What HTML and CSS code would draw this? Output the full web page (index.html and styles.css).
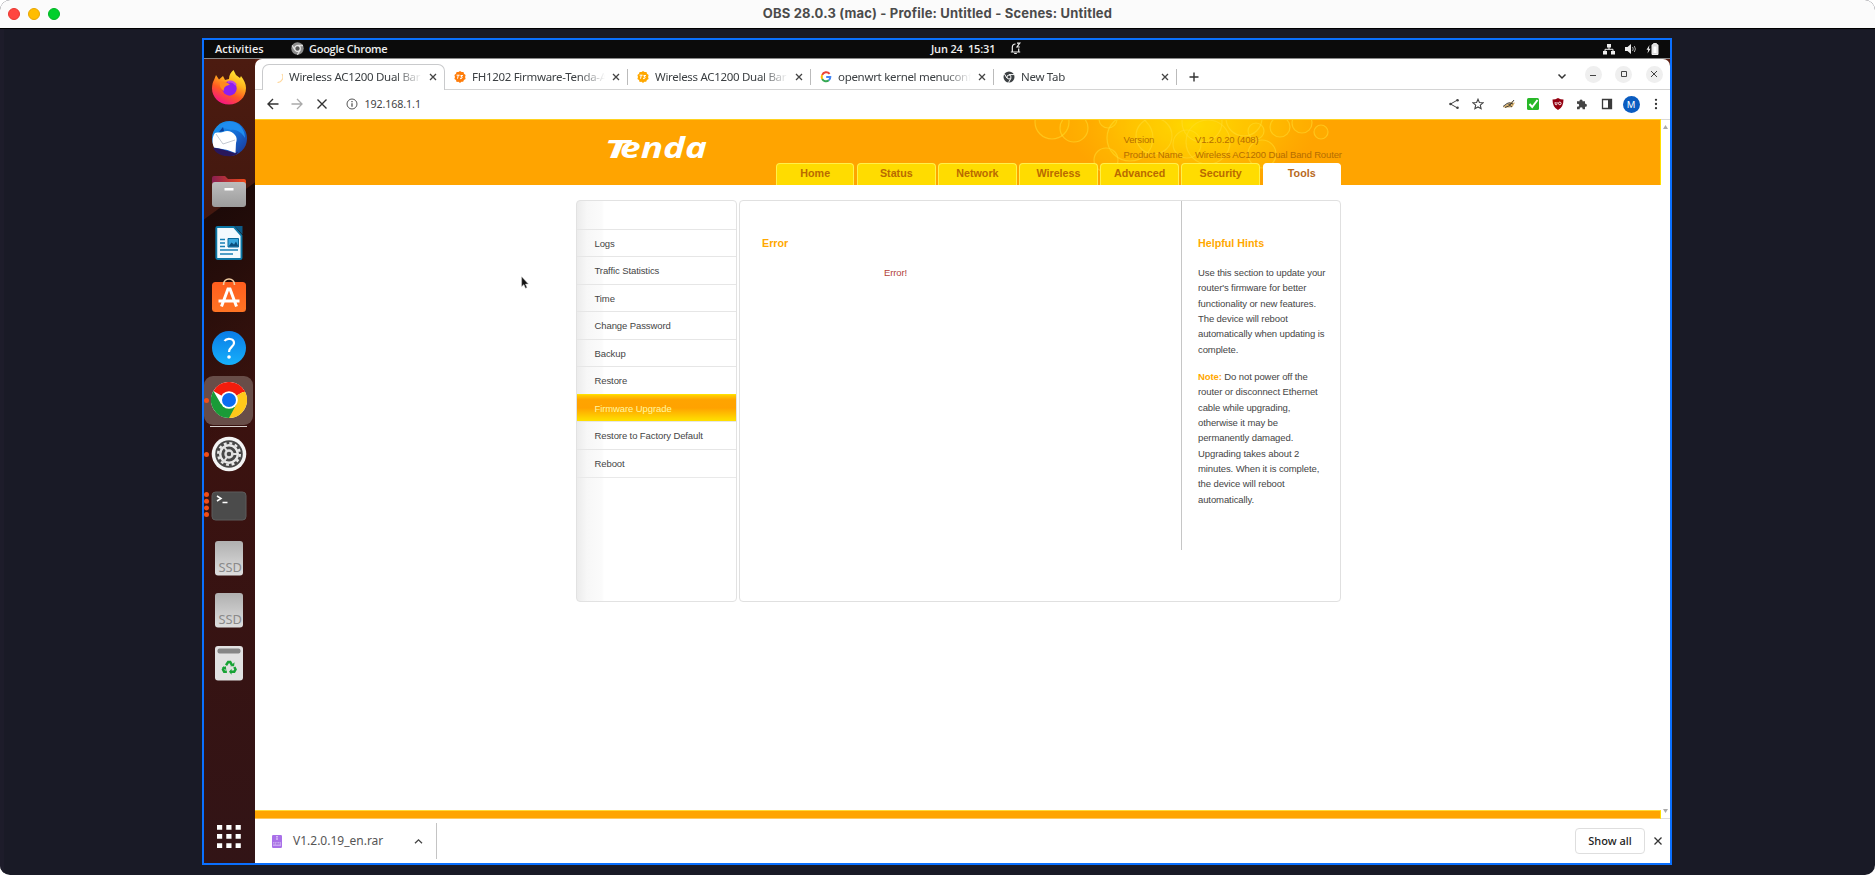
FILE: index.html
```html
<!DOCTYPE html>
<html lang="en">
<head>
<meta charset="utf-8">
<title>OBS 28.0.3 (mac) - Profile: Untitled - Scenes: Untitled</title>
<link rel="stylesheet" href="styles.css">
</head>
<body>
<svg class="defs" width="0" height="0">
  <defs>
    <linearGradient id="ff" x1=".8" y1="0" x2=".3" y2="1"><stop offset="0" stop-color="#fff33a"/><stop offset=".35" stop-color="#ffb41e"/><stop offset=".65" stop-color="#ff5a22"/><stop offset="1" stop-color="#f5108a"/></linearGradient>
    <linearGradient id="tb" x1="0" y1="0" x2="1" y2="1"><stop offset="0" stop-color="#1aa0f5"/><stop offset=".55" stop-color="#1468d2"/><stop offset="1" stop-color="#1c2f8c"/></linearGradient>
    <linearGradient id="fold" x1="0" x2="1"><stop offset="0" stop-color="#8a1f50"/><stop offset="1" stop-color="#f04a18"/></linearGradient>
    <linearGradient id="grey" x1="0" y1="0" x2="0" y2="1"><stop offset="0" stop-color="#bdbdbd"/><stop offset="1" stop-color="#9c9c9c"/></linearGradient>
    <linearGradient id="ssd" x1="0" y1="0" x2="0" y2="1"><stop offset="0" stop-color="#b0b0b0"/><stop offset="1" stop-color="#dedede"/></linearGradient>
    <linearGradient id="bag" x1="0" y1="0" x2="0" y2="1"><stop offset="0" stop-color="#ff5e1e"/><stop offset="1" stop-color="#ff7424"/></linearGradient>
    <linearGradient id="help" x1="0" y1="0" x2="0" y2="1"><stop offset="0" stop-color="#0a7ce6"/><stop offset="1" stop-color="#16b0fb"/></linearGradient>
    <radialGradient id="glow"><stop offset="0" stop-color="#ffdc00" stop-opacity=".95"/><stop offset=".5" stop-color="#ffd000" stop-opacity=".6"/><stop offset="1" stop-color="#ffc000" stop-opacity="0"/></radialGradient>
    <symbol id="x" viewBox="0 0 10 10"><path d="M2 2l6 6M8 2l-6 6" stroke="currentColor" stroke-width="1.3" fill="none"/></symbol>
    <symbol id="tenda" viewBox="0 0 12 12"><path d="M6 0l1.6 1 1.9-.1.5 1.8L11.6 4l-.5 2 .5 2-1.7 1-.7 1.8-1.8-.1L6 12l-1.500-1.200-1.900.1L2 9 .4 8l.6-2L.4 4 2 2.800l.6-1.900 1.900.1z" fill="currentColor"/><path d="M2.600 4.200h3M4.300 4.200l-.8 3.500M6.500 4.500h2.300l-2 1.400c2.400.1 1.600 2-.8 1.700" stroke="#fff" stroke-width="1" fill="none"/></symbol>
  </defs>
</svg>
<div class="obs">
  <header class="titlebar">
    <div class="lights"><i class="red"></i><i class="yellow"></i><i class="green"></i></div>
    <div class="title">OBS 28.0.3 (mac) - Profile: Untitled - Scenes: Untitled</div>
  </header>
  <main class="stage">
    <div class="capture">
      <div class="topbar">
        <span class="act">Activities</span>
        <svg class="app-ico" width="13" height="13" viewBox="0 0 13 13"><circle cx="6.500" cy="6.500" r="6.200" fill="#8d8d8d"/><path d="M6.500 3.500h5.500M3.900 8L1.200 3.400M9.100 8l-2.700 4.700" stroke="#ddd" stroke-width="1.300"/><circle cx="6.500" cy="6.500" r="2.800" fill="#555" stroke="#eee" stroke-width="1.200"/></svg>
        <span class="app">Google Chrome</span>
        <span class="clock">Jun 24&nbsp; 15:31</span>
        <svg class="bell" width="11" height="13" viewBox="0 0 11 13"><path d="M.8 10h9.400M2.300 10V5.500C2.300 3.300 3.500 2 5.500 2M8.700 6.500V10M4.200 11.500h2.600M7 1.200h2.800L7 5h2.800" stroke="#eee" stroke-width="1.200" fill="none"/></svg>
        <div class="tray">
          <svg width="12" height="12" viewBox="0 0 12 12"><path d="M4 1h4v3.500H4zM0 8h4v3.500H0zM8 8h4v3.500H8z" fill="#eee"/><path d="M6 4v2.300M2 8V6.300h8V8" stroke="#eee" fill="none"/></svg>
          <svg width="13" height="12" viewBox="0 0 13 12"><path d="M1 4h2.500L7 1v10L3.500 8H1z" fill="#eee"/><path d="M8.500 4q1.500 2 0 4M10.300 3q2.200 3 0 6" stroke="#aaa" fill="none"/></svg>
          <svg width="13" height="12" viewBox="0 0 13 12"><path d="M3.500 2L.5 6.800h1.700L1.500 10.500 4.500 5.700H2.800z" fill="#eee"/><path d="M6 1.800h1.500V.6h3v1.200H12v9.700H6z" fill="#ddd" stroke="#eee"/><path d="M7.500 3.500h3v6.500h-3z" fill="#fff"/></svg>
        </div>
      </div>
      <div class="desktop">
        <nav class="dock">
          <div class="item"><svg viewBox="0 0 36 36"><path d="M18 35.500C8 35.500 1 28 1 19.500c0-4 1-7 2-8.500l2-5 3 4.500L12 7l2 4 4-1C18 6 20 3 22.500 1L25 6l4 3 1-2c3 4 5 8 5 12 0 9.500-7.500 16.500-17 16.500z" fill="url(#ff)"/><circle cx="18.500" cy="19.500" r="7.200" fill="#8c1ff0"/><path d="M9 13c4-1 8 0 10 3-3 0-7 2-6 6-3-2-5-5-4-9z" fill="#ff8a1c"/><path d="M17 13c3-1 6 0 8 3" stroke="#c14ae0" stroke-width="2" fill="none"/></svg></div>
          <div class="item"><svg viewBox="0 0 36 36"><circle cx="18.500" cy="17.500" r="17.500" fill="url(#tb)"/><path d="M9 6C13 1 20-1 27 3c4 3 7 8 7 14-3-5-8-9-14-8z" fill="#1f8df0"/><path d="M4 12c3-1 5 0 8-1 4-2 9-1 12 3 2 2 2 5 1 8l-.5 10-8-3L3 26.500C1 22 1 16 4 12z" fill="#fff"/><path d="M5 13l7 10 12-4" stroke="#c3c9d2" fill="none"/><path d="M2 27c5 0 13 2 22 5.500l3-2c-1 3-3 4-6 4.500C12 36 5 33 2 27z" fill="#28175c"/><path d="M8 11l4-5 1 4z" fill="#0b3d9a"/></svg></div>
          <div class="item"><svg viewBox="0 0 36 36"><path d="M1 15V5q0-2 2-2h11l3 3h16q2 0 2 2v7z" fill="url(#fold)"/><rect x="1" y="9" width="34" height="25" rx="3" fill="url(#grey)"/><rect x="13.500" y="15" width="9" height="2.500" fill="#fff"/></svg></div>
          <div class="item"><svg viewBox="0 0 36 36"><path d="M6.500 2H23l7.500 8.500V33q0 1-1.200 1H6.500q-1.200 0-1.200-1.200V3q0-1 1.200-1z" fill="#f2fafe" stroke="#0b76a5" stroke-width="1.900"/><path d="M23.500 1H31.500v8.500z" fill="#0d5a86"/><path d="M9 14.500h5M9 18h5M9 21.500h5M9 25h18M9 29h13" stroke="#1780b5" stroke-width="1.500"/><path d="M17 13.500h10.500v8.500H17z" fill="#3ba8dd" stroke="#0b6a9a"/><path d="M17.500 21.500l3-4 2.500 2 2-3 2.500 5z" fill="#0c4f7c"/></svg></div>
          <div class="item"><svg viewBox="0 0 36 36"><rect x="1" y="5" width="34" height="30" rx="3.500" fill="url(#bag)"/><path d="M12.500 8C12 0 24 0 23.500 8" stroke="#f3cfa4" stroke-width="1.600" fill="none"/><path d="M10.500 29.500L17 12h2l6.500 17.500M7.500 24h21" stroke="#fff" stroke-width="3" fill="none"/></svg></div>
          <div class="item"><svg viewBox="0 0 36 36"><circle cx="18" cy="18" r="17" fill="url(#help)"/><path d="M13.500 11c2-3 9.500-3 9.500 2 0 4-5 4-5 9" stroke="#fff" stroke-width="2.200" fill="none"/><circle cx="18" cy="27" r="1.800" fill="#fff"/></svg></div>
          <div class="item on d1"><svg viewBox="0 0 36 36"><circle cx="18" cy="18" r="18" fill="#fff"/><path d="M18 18L2.400 9A18 18 0 0 1 33.600 9z" fill="#f21c0d"/><path d="M18 18L33.600 9A18 18 0 0 1 18 36l-1-9z" fill="#ffc81a"/><path d="M18 18L10 22 2.400 9A18 18 0 0 0 18 36l7-13z" fill="#1a9b37"/><path d="M18 9h15.600" stroke="#f21c0d" stroke-width="2"/><circle cx="18" cy="18" r="8.800" fill="#fff"/><circle cx="18" cy="18" r="7" fill="#0b6cf2"/></svg></div>
          <hr>
          <div class="item d1"><svg viewBox="0 0 36 36"><circle cx="18" cy="18" r="17.300" fill="#f4f4f4"/><circle cx="18" cy="18" r="13.800" fill="#484848"/><circle cx="18" cy="18" r="10.800" fill="none" stroke="#e8e8e8" stroke-width="2.400" stroke-dasharray="2.900 2.755"/><circle cx="18" cy="18" r="8.800" fill="none" stroke="#e8e8e8" stroke-width="2.400"/><circle cx="18" cy="18" r="3.500" fill="none" stroke="#e0e0e0" stroke-width="2.400"/><path d="M20 18h6M16.500 16l-3.500-5.500M16.500 20l-3.500 5.500" stroke="#e0e0e0" stroke-width="2"/></svg></div>
          <div class="item d4"><svg viewBox="0 0 36 36"><rect x="1" y="4" width="34" height="28" rx="3.500" fill="#4b4b4b" stroke="#5c5c5c"/><path d="M6 8l4 2.500L6 13M11.500 14.500h5" stroke="#fff" stroke-width="1.500" fill="none"/></svg></div>
          <div class="item"><svg viewBox="0 0 36 36"><rect x="4" y="1" width="28" height="34.500" rx="3" fill="url(#ssd)"/><text x="7.500" y="31.500" textLength="23.500" lengthAdjust="spacingAndGlyphs" class="ssd">SSD</text></svg></div>
          <div class="item"><svg viewBox="0 0 36 36"><rect x="4" y="1" width="28" height="34.500" rx="3" fill="url(#ssd)"/><text x="7.500" y="31.500" textLength="23.500" lengthAdjust="spacingAndGlyphs" class="ssd">SSD</text></svg></div>
          <div class="item"><svg viewBox="0 0 36 36"><rect x="4" y="1" width="28" height="34.500" rx="3" fill="#e2e2e2"/><rect x="6.500" y="3.500" width="23" height="5" rx="2" fill="#868686"/><g transform="translate(2.700 3.700) scale(.85)"><g fill="none" stroke="#18a335" stroke-width="2.900"><path d="M14.500 19.500l2.500-3.800h2.500l2 3.500M24.300 21.500l1.400 3-1.500 2.500h-4M15.500 27h-3.200l-1.400-2.600 1.700-3"/></g><path d="M19.500 20.500h4.500l.5-4.500zM21 23.500L18 27l3 3.500zM9.500 22.500l4.800-2 .5 4.500z" fill="#18a335"/></g></svg></div>
          <svg class="grid" width="25" height="25" viewBox="0 0 25 25" fill="#fff"><path d="M0 1h5.200v4.800H0zM9.300 1h5.200v4.800H9.300zM18.600 1h5.200v4.800h-5.200zM0 10h5.200v4.800H0zM9.300 10h5.200v4.800H9.300zM18.600 10h5.200v4.800h-5.200zM0 19.200h5.200V24H0zM9.300 19.200h5.200V24H9.300zM18.600 19.200h5.200V24h-5.200z"/></svg>
        </nav>
        <section class="chrome">
          <div class="tabs">
            <div class="tab active"><svg class="fav" viewBox="0 0 12 12"><path d="M6.500 11.500A5.500 5.500 0 0 0 11 3" stroke="#ffd9a0" stroke-width="1.200" fill="none"/></svg><span>Wireless AC1200 Dual Bar</span><svg class="cl"><use href="#x"/></svg></div>
            <div class="tab"><svg class="fav or"><use href="#tenda"/></svg><span>FH1202 Firmware-Tenda-A</span><svg class="cl"><use href="#x"/></svg></div>
            <div class="tab"><svg class="fav am"><use href="#tenda"/></svg><span>Wireless AC1200 Dual Bar</span><svg class="cl"><use href="#x"/></svg></div>
            <div class="tab"><svg class="fav" viewBox="0 0 12 12" fill="none" stroke-width="2"><path d="M9.600 2.900A4.300 4.300 0 0 0 2.200 4" stroke="#ea4335"/><path d="M2.200 4a4.300 4.300 0 0 0 0 4" stroke="#fbbc05"/><path d="M2.200 8a4.300 4.300 0 0 0 6.600 1.300" stroke="#34a853"/><path d="M8.800 9.300Q10.300 8 10.300 6H6.200" stroke="#4285f4"/></svg><span>openwrt kernel menuconf</span><svg class="cl"><use href="#x"/></svg></div>
            <div class="tab"><svg class="fav" viewBox="0 0 12 12"><circle cx="6" cy="6" r="5.500" fill="#3c4043"/><path d="M6 3.600h5.200M4 7.200L1.400 2.900M8 7.200l-2.500 4.300" stroke="#fff" stroke-width="1"/><circle cx="6" cy="6" r="2" fill="#3c4043" stroke="#fff" stroke-width="1"/></svg><span>New Tab</span><svg class="cl"><use href="#x"/></svg></div>
            <svg class="plus" viewBox="0 0 10 10"><path d="M5 .5v9M.5 5h9" stroke="#333" stroke-width="1.400"/></svg>
            <div class="wins">
              <svg class="chev" viewBox="0 0 10 10"><path d="M1.500 3.500L5 7l3.500-3.500" fill="none" stroke="#333" stroke-width="1.500"/></svg>
              <i><svg viewBox="0 0 10 10"><path d="M2 6.500h6" stroke="#444"/></svg></i>
              <i><svg viewBox="0 0 10 10"><path d="M2.500 2.500h5v5h-5z" fill="none" stroke="#444"/></svg></i>
              <i><svg viewBox="0 0 10 10"><path d="M2 2l6 6M8 2l-6 6" stroke="#444"/></svg></i>
            </div>
          </div>
          <div class="toolbar">
            <svg class="b" viewBox="0 0 12 12"><path d="M11.500 6H1.200M6 1L1 6l5 5" stroke="#333" stroke-width="1.400" fill="none"/></svg>
            <svg class="b" viewBox="0 0 12 12"><path d="M.5 6h10.300M6 1l5 5-5 5" stroke="#aaa" stroke-width="1.300" fill="none"/></svg>
            <svg class="b" viewBox="0 0 12 12"><path d="M1.500 1.500l9 9M10.500 1.500l-9 9" stroke="#333" stroke-width="1.400"/></svg>
            <svg class="info" viewBox="0 0 12 12"><circle cx="6" cy="6" r="5" fill="none" stroke="#555"/><path d="M6 5.300v3.400M6 3v1.300" stroke="#555" stroke-width="1.300"/></svg>
            <span class="url">192.168.1.1</span>
            <div class="ext">
              <svg viewBox="0 0 12 12"><path d="M9.500 2L2.500 6l7 4" stroke="#444" fill="none"/><circle cx="9.500" cy="2.200" r="1.300" fill="#444"/><circle cx="2.500" cy="6" r="1.300" fill="#444"/><circle cx="9.500" cy="9.800" r="1.300" fill="#444"/></svg>
              <svg viewBox="0 0 12 12"><path d="M6 1.200l1.400 3.300 3.600.3L8.300 7.200l.8 3.500L6 8.900l-3.100 1.800.8-3.500L1 4.800l3.600-.3z" fill="none" stroke="#444" stroke-width="1.100"/></svg>
              <svg class="gap" viewBox="0 0 12 12"><path d="M0 9l4-3 7-3.500L9 5l3-.5L9.500 9l-3 .5L1 9.500z" fill="#d9b26e"/><path d="M0 8.500l4-3M4 5l3 2 4-5M5.500 4.500L10 6M2 9.500l5-2 2 1.500" stroke="#333" stroke-width=".9" fill="none"/></svg>
              <svg viewBox="0 0 12 12"><rect width="12" height="12" rx="1.500" fill="#28b828"/><path d="M2.500 6l2.700 3L10.500 2" stroke="#fff" stroke-width="2" fill="none"/></svg>
              <svg viewBox="0 0 12 12"><path d="M6 0q2.500 1.500 5.500 1.500 0 8-5.500 10.500Q.5 9.500.5 1.500 3.500 1.500 6 0z" fill="#940010"/><path d="M3.200 4v1.800q0 1 .9 1t.9-1V4M6.500 5.400a1.300 1.300 0 1 0 2.600 0 1.300 1.300 0 1 0-2.600 0" fill="none" stroke="#fff" stroke-width=".9"/></svg>
              <svg viewBox="0 0 12 12"><path d="M1 3.300h2.600a1.500 1.500 0 1 1 2.900 0H9v2.500a1.500 1.500 0 1 1 0 2.900v2.500H6.600a1.500 1.500 0 1 0-2.900 0H1V8.600a1.500 1.500 0 1 0 0-2.700z" fill="#444"/></svg>
              <svg viewBox="0 0 12 12"><path d="M1.500 1.500h9v9h-9z" fill="none" stroke="#3a3a3a" stroke-width="1.300"/><path d="M7 1.500h3.500v9H7z" fill="#3a3a3a"/></svg>
              <b class="me">M</b>
              <svg viewBox="0 0 12 12" fill="#333"><circle cx="6" cy="1.800" r="1.150"/><circle cx="6" cy="6" r="1.150"/><circle cx="6" cy="10.200" r="1.150"/></svg>
            </div>
          </div>
          <div class="view">
            <div class="page">
              <div class="head">
                <svg class="bubbles" width="330" height="65" viewBox="0 0 330 65" fill="#ffe000" fill-opacity=".13" stroke="#ffdc30" stroke-opacity=".55" stroke-width="1.200">
                  <ellipse cx="170" cy="5" rx="125" ry="66" fill="url(#glow)" fill-opacity="1" stroke="none"/>
                  <circle cx="30" cy="2" r="17"/><circle cx="52" cy="8" r="14"/><circle cx="86" cy="-1" r="9"/><circle cx="108" cy="18" r="23"/><circle cx="132" cy="16" r="18"/><circle cx="84" cy="40" r="12"/><circle cx="165" cy="24" r="14"/><circle cx="186" cy="22" r="22"/><circle cx="180" cy="2" r="20"/><circle cx="234" cy="11" r="8"/><circle cx="240" cy="34" r="14"/><circle cx="258" cy="7" r="10"/><circle cx="280" cy="3" r="10"/><circle cx="299" cy="12" r="7"/><circle cx="222" cy="-2" r="18"/>
                </svg>
                <div class="head-in">
                  <svg class="logo" width="104" height="30" viewBox="0 0 104 30"><g class="brand"><text x="-3" y="25" font-size="24.500" textLength="25" lengthAdjust="spacingAndGlyphs">T</text><text x="13" y="25" font-size="29" textLength="87" lengthAdjust="spacingAndGlyphs">enda</text></g></svg>
                  <div class="head-r">
                    <dl><dt>Version</dt><dd>V1.2.0.20 (408)</dd><dt>Product Name</dt><dd>Wireless AC1200 Dual Band Router</dd></dl>
                    <div class="menu"><a>Home</a><a>Status</a><a>Network</a><a>Wireless</a><a>Advanced</a><a>Security</a><a class="cur">Tools</a></div>
                  </div>
                </div>
              </div>
              <div class="body">
                <ul class="side"><li>Logs</li><li>Traffic Statistics</li><li>Time</li><li>Change Password</li><li>Backup</li><li>Restore</li><li class="sel">Firmware Upgrade</li><li>Restore to Factory Default</li><li>Reboot</li></ul>
                <div class="panel">
                  <div class="msg"><h2>Error</h2><p>Error!</p></div>
                  <div class="hints"><h2>Helpful Hints</h2>
                    <p>Use this section to update your<br>router's firmware for better<br>functionality or new features.<br>The device will reboot<br>automatically when updating is<br>complete.</p>
                    <p><b>Note:</b> Do not power off the<br>router or disconnect Ethernet<br>cable while upgrading,<br>otherwise it may be<br>permanently damaged.<br>Upgrading takes about 2<br>minutes. When it is complete,<br>the device will reboot<br>automatically.</p>
                  </div>
                </div>
              </div>
              <div class="foot"></div>
            </div>
            <div class="scroll"><svg width="5" height="4" viewBox="0 0 5 4"><path d="M0 4l2.500-4L5 4z" fill="#aaa"/></svg><svg width="5" height="4" viewBox="0 0 5 4"><path d="M0 0l2.500 4L5 0z" fill="#aaa"/></svg></div>
          </div>
          <div class="shelf">
            <div class="dl"><svg width="10" height="13" viewBox="0 0 10 13"><rect width="10" height="13" rx="1.200" fill="#a970e8"/><path d="M5 1v4" stroke="#f0e2ff" stroke-width="1.300" stroke-dasharray="1.500 .8"/><path d="M1 7h8v4H1z" fill="#c9a5f2"/><path d="M2 9.800V8h1.200M4.300 9.800V8h1.500v1.800M7 9.800V8h1.200" stroke="#9a66d8" stroke-width=".7" fill="none"/></svg><span>V1.2.0.19_en.rar</span><svg class="up" width="9" height="9" viewBox="0 0 9 9"><path d="M1 6.300l3.500-3.500L8 6.300" stroke="#444" stroke-width="1.300" fill="none"/></svg></div>
            <button class="all">Show all</button>
            <svg class="shx" viewBox="0 0 10 10"><path d="M1.500 1.500l7 7M8.500 1.500l-7 7" stroke="#333" stroke-width="1.300"/></svg>
          </div>
        </section>
      </div>
      <svg class="cursor" width="8" height="13" viewBox="0 0 8 13"><path d="M.7.8v9.700l2.200-2 1.600 3.700 1.500-.6L4.400 8h2.900z" fill="#111" stroke="#bbb" stroke-width=".5"/></svg>
    </div>
  </main>
</div>
</body>
</html>
```
FILE: styles.css
```css
* { box-sizing: border-box; }
body { margin: 0; width: 1875px; height: 875px; overflow: hidden; background: #fff; font-family: "Liberation Sans", Arial, sans-serif; }
svg { display: block; flex: none; }
.defs { position: absolute; }
.obs { height: 875px; border-radius: 10px; overflow: hidden; background: #191a26; display: flex; flex-direction: column; }
.titlebar { height: 29px; background: #fbfbfb; border-bottom: 1px solid #000; display: grid; grid-template-columns: 200px 1fr 200px; align-items: center; }
.lights { display: flex; gap: 8px; padding-left: 8px; }
.lights i { width: 12px; height: 12px; border-radius: 50%; }
.red { background: #ff4640; border: 1px solid #e83730; }
.yellow { background: #ffbd00; border: 1px solid #e8a600; }
.green { background: #00cf2c; border: 1px solid #00b524; }
.title { text-align: center; font: 700 13px/26px Inter, sans-serif; color: #4b4b4b; letter-spacing: .18px; white-space: nowrap; padding-bottom: 2px; }
.stage { flex: 1; padding: 9px 0 0 198px; border-left: 4px solid #1d1c2a; }
.capture { width: 1470px; height: 827px; border: 2px solid #0a70ff; display: flex; flex-direction: column; position: relative; background: #fff; }
.topbar { height: 19px; background: #0b0b0b; border-bottom: 1px solid #8a8a8a; color: #eee; display: flex; align-items: center; padding: 0 11px 1px; font: 600 11px/17px "Open Sans", sans-serif; white-space: nowrap; }
.act { width: 76px; letter-spacing: .05px; }
.app-ico { margin-right: 5px; }
.app { width: 622px; letter-spacing: -.28px; }
.clock { width: 79px; letter-spacing: -.18px; }
.tray { margin-left: auto; display: flex; gap: 9px; }
.desktop { flex: 1; display: flex; min-height: 0; background: #5b2014; }
.dock { width: 51px; background: linear-gradient(144deg, transparent 105px, #1d0a08 106px, #260d0a 160px, transparent 300px) 0 30px no-repeat, linear-gradient(#4c1b10, #43180f 20%, #3b120f 45%, #321416); display: flex; flex-direction: column; padding-top: 2px; }
.item { height: 52.100px; flex: none; padding-left: 6.500px; display: flex; align-items: center; position: relative; }
.item > svg { width: 36px; height: 36px; }
.on::before { content: ""; position: absolute; inset: 2px 2px 1px 0; border-radius: 9px; background: #684d48; }
.on > svg { position: relative; }
.d1::after, .d4::after { content: ""; position: absolute; left: 0; top: 24px; width: 5px; height: 5px; border-radius: 50%; background: #f04e1a; }
.d4::after { top: 13.500px; box-shadow: 0 6.700px #f04e1a, 0 13.400px #f04e1a, 0 20px #f04e1a; }
.dock hr { width: 37px; height: 1px; border: 0; margin: .5px 0 1px 6px; background: #d8d0ce; flex: none; }
.d4::after { top: 12px; }
.ssd { font: 12.500px "Noto Sans", sans-serif; fill: #8a8a8a; }
.grid { margin: auto 0 14px 13px; }
.chrome { flex: 1; display: flex; flex-direction: column; background: #fff; border-radius: 7px 7px 0 0; min-width: 0; }
.tabs { height: 31px; display: flex; align-items: stretch; padding-left: 7px; border-bottom: 1px solid #d4d4d4; font: 11.500px/26px "Noto Sans", sans-serif; color: #3c4043; }
.tab { width: 183px; display: flex; align-items: center; padding: 5px 0 0 9px; position: relative; }
.tab:not(.active)::after { content: ""; position: absolute; right: 0; top: 10px; height: 16px; width: 1px; background: #bbb; }
.active { border: 1px solid #c9cacc; border-bottom: 0; border-radius: 7px 7px 0 0; margin: 5px 0 -1px; padding: 0 0 2px 8px; background: #fff; }
.fav { width: 12px; height: 12px; }
.or { color: #ff7d0a; }
.am { color: #ffa800; }
.tab span { width: 133px; margin-left: 6px; overflow: hidden; white-space: nowrap; letter-spacing: -.3px; mask-image: linear-gradient(90deg, #000 80%, transparent); -webkit-mask-image: linear-gradient(90deg, #000 80%, transparent); }
.cl { width: 10px; height: 10px; margin-left: 6px; color: #444; }
.plus { width: 10px; height: 10px; margin: 13px 0 0 12px; }
.wins { margin-left: auto; display: flex; align-items: center; gap: 13.500px; padding: 0 7.500px 0 0; }
.wins i { width: 17px; height: 17px; border-radius: 50%; background: #efefef; padding: 3.500px; }
.wins i svg { width: 10px; height: 10px; }
.chev { width: 10px; height: 10px; margin: 4px 4px 0 0; }
.toolbar { height: 29px; display: flex; align-items: center; padding: 0 8.500px 1px 11.500px; }
.b { width: 12px; height: 12px; margin-right: 12.500px; }
.info { width: 12px; height: 12px; margin: 0 7px 0 5.500px; }
.url { font: 10.700px/20px "Noto Sans", sans-serif; color: #444; letter-spacing: -.1px; }
.ext { margin-left: auto; display: flex; align-items: center; gap: 12.500px; }
.ext svg { width: 12px; height: 12px; }
.ext .gap { margin-left: 6px; }
.me { width: 17px; height: 17px; margin: 0 -2.500px; border-radius: 50%; background: #0b5cc0; color: #fff; font: 9.500px/17px "Noto Sans", sans-serif; text-align: center; }
.view { flex: 1; display: flex; min-height: 0; }
.page { flex: 1; display: flex; flex-direction: column; font-size: 9.500px; letter-spacing: -.1px; line-height: 15.310px; color: #454545; }
.head { height: 66px; background: #ffa400; border-top: 1px solid #ffd21f; border-right: 1px solid #ffe000; position: relative; }
.bubbles { position: absolute; left: 767px; top: 0; overflow: hidden; }
.head-in { position: relative; display: flex; margin-left: 350px; width: 736px; }
.logo { margin: 13px 0 0 2px; width: 104px; overflow: visible; }
.brand { font-family: "Open Sans", sans-serif; font-weight: 700; font-style: italic; fill: #fff; letter-spacing: 0; }
.head-r { margin-left: 65px; width: 565px; }
.head-r dl { margin: 0; padding: 12px 0 0 347.500px; display: grid; grid-template-columns: 71.500px 1fr; height: 43px; align-content: start; color: #b56d00; white-space: nowrap; letter-spacing: -.13px; }
.head-r dd { margin: 0; }
.menu { display: flex; gap: 2.700px; height: 22px; letter-spacing: 0; }
.menu a { width: 78.500px; background: #ffdc00; border: 1px solid #fff04a; border-bottom: 0; border-radius: 4px 4px 0 0; font-weight: 700; font-size: 10.720px; line-height: 19px; text-align: center; color: #b96a00; }
.menu .cur { background: #fff; border-color: #fff; color: #b8691c; }
.body { display: flex; gap: 2.500px; padding: 15px 0 0 320.500px; flex: 1; }
.side { list-style: none; margin: 0; width: 161px; height: 402px; padding: 27.500px 0 0; border: 1px solid #e2e2e2; border-radius: 4px; background: linear-gradient(90deg, #ececec, #f7f7f7 10px, #fbfbfb 25px, #fff 27px); }
.side li { height: 27.570px; padding-left: 18px; line-height: 27px; border-top: 1px solid #e6e6e6; }
.side li:last-child { height: 28.500px; border-bottom: 1px solid #e9e9e9; }
.side .sel { background: linear-gradient(#ffd000, #ffa400 18%, #ffa200 50%, #ffd800 92%, #ffe000); border-color: #ffe000; color: #fff7a0; }
.panel { width: 602px; height: 402px; border: 1px solid #e0e0e0; border-radius: 4px; display: flex; }
.msg { width: 442px; height: 349px; border-right: 1px solid #c6c6c6; padding: 34px 0 0 22px; }
.panel h2 { margin: 0; font-size: 10.720px; letter-spacing: 0; line-height: 17px; color: #ffa800; }
.msg p { margin: 13px 0 0 122px; color: #b2423a; }
.hints { padding: 34px 0 0 16px; white-space: nowrap; }
.hints p { margin: 13px 0 0; }
.hints p + p { margin-top: 12.250px; }
.hints b { color: #ffa800; }
.foot { height: 9px; background: #ffa400; border-top: 1px solid #ffd83a; border-bottom: 1px solid #ffc860; border-right: 1px solid #ffe000; }
.scroll { width: 9px; display: flex; flex-direction: column; justify-content: space-between; align-items: center; padding: 5px 0; border-top: 1px solid #d8d8d8; border-bottom: 1px solid #ddd; }
.shelf { height: 44px; display: flex; align-items: center; padding: 0 7px 0 0; }
.dl { width: 182px; height: 36px; display: flex; align-items: center; padding-left: 17px; border-right: 1px solid #c4c4c4; font: 12px/20px "Noto Sans", sans-serif; color: #555; }
.dl span { margin-left: 11px; letter-spacing: 0; }
.up { margin-left: auto; margin-right: 13px; }
.all { margin-left: auto; width: 70px; height: 26px; border: 1px solid #dedede; border-radius: 4px; background: #fff; font: 500 11px/20px "Noto Sans", sans-serif; color: #222; padding: 0; white-space: nowrap; }
.shx { width: 10px; height: 10px; margin-left: 8px; }
.cursor { position: absolute; left: 317px; top: 236px; }
```
